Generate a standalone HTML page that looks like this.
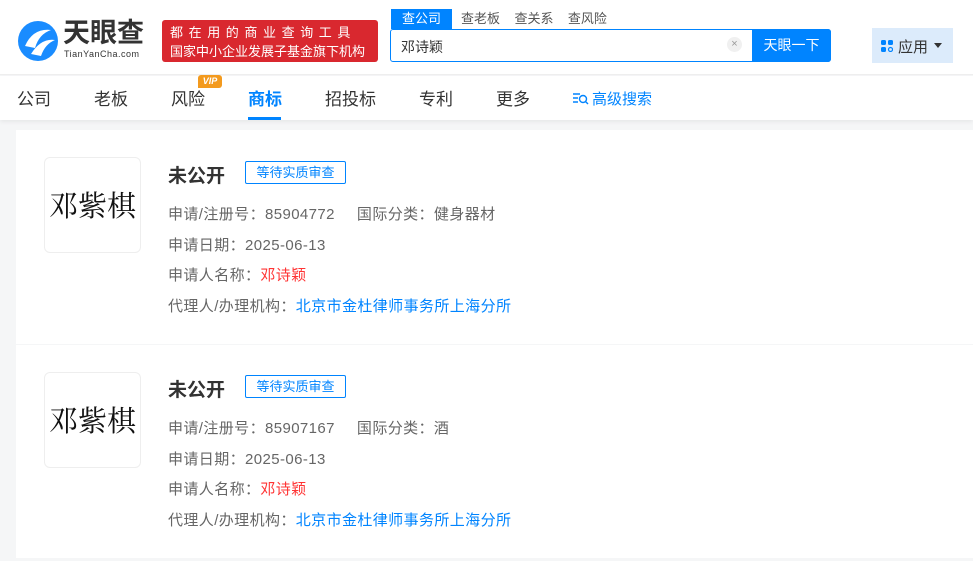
<!DOCTYPE html>
<html><head><meta charset="utf-8"><style>
*{margin:0;padding:0;box-sizing:border-box}
body{width:973px;height:561px;overflow:hidden;background:#f5f6f7;font-family:"Liberation Sans","Noto Sans CJK SC",sans-serif;position:relative}
.hdr{position:absolute;left:0;top:0;width:973px;height:75px;background:#fff;border-bottom:1px solid #eee}
.nav{position:absolute;left:0;top:76px;width:973px;height:44px;background:#fff;box-shadow:0 2px 4px rgba(0,0,0,.06)}
.nav span{position:absolute;top:9px;font-size:17px;color:#333}
.abs{position:absolute}
.card{position:absolute;left:16px;width:957px;background:#fff}
.logo{position:absolute;left:28px;top:27px;width:97px;height:96px;border:1px solid #eee;border-radius:6px;font-family:"Noto Serif CJK SC",serif;font-size:29px;color:#111;text-align:center;line-height:94px}
.t{position:absolute;left:152px;font-size:15px;color:#666;letter-spacing:.4px}
.b{color:#0084ff}.r{color:#f33}
</style></head><body>
<div class="hdr">
 <svg class="abs" style="left:17px;top:20px" width="42" height="42" viewBox="0 0 42 42"><circle cx="21" cy="21" r="20" fill="#1a8cff"/><path d="M8 26 Q16 8 34 10 Q22 14 18 28 Z" fill="#fff"/><path d="M14 34 Q24 18 38 20 Q28 24 24 36 Z" fill="#fff"/></svg>
 <div class="abs" style="left:63px;top:19px;font-size:27px;line-height:28px;font-weight:bold;color:#333">天眼查</div>
 <div class="abs" style="left:64px;top:49px;font-size:9px;line-height:10px;color:#333;letter-spacing:.5px">TianYanCha.com</div>
 <div class="abs" style="left:162px;top:20px;width:216px;height:42px;background:#d9282f;border-radius:3px;color:#fff;font-size:13px;line-height:19px;padding:3px 0 0 8px"><div style="letter-spacing:5.6px">都在用的商业查询工具</div><div>国家中小企业发展子基金旗下机构</div></div>
 <div class="abs" style="left:391px;top:9px;width:61px;height:20px;background:#0084ff;color:#fff;font-size:13px;text-align:center;line-height:19px">查公司</div>
 <div class="abs" style="left:461px;top:9px;font-size:13px;color:#555;line-height:19px">查老板&nbsp;&nbsp;&nbsp;&nbsp;查关系&nbsp;&nbsp;&nbsp;&nbsp;查风险</div>
 <div class="abs" style="left:390px;top:29px;width:441px;height:33px;border:1px solid #0084ff;border-radius:3px;background:#fff"></div>
 <div class="abs" style="left:401px;top:37px;font-size:14px;color:#333">邓诗颖</div>
 <div class="abs" style="left:727px;top:37px;width:15px;height:15px;border-radius:50%;background:#f0f0f0;color:#999;font-size:11px;text-align:center;line-height:15px">×</div>
 <div class="abs" style="left:752px;top:29px;width:79px;height:33px;background:#0084ff;border-radius:0 3px 3px 0;color:#fff;font-size:14px;text-align:center;line-height:33px">天眼一下</div>
 <div class="abs" style="left:872px;top:28px;width:81px;height:35px;background:#dcebfb"></div>
 <svg class="abs" style="left:881px;top:40px" width="12" height="12"><rect x="0" y="0" width="5" height="5" rx="1.5" fill="#0084ff"/><rect x="7" y="0" width="5" height="5" rx="1.5" fill="#0084ff"/><rect x="0" y="7" width="5" height="5" rx="1.5" fill="#0084ff"/><circle cx="9.5" cy="9.5" r="2" fill="none" stroke="#0084ff" stroke-width="1.2"/></svg>
 <div class="abs" style="left:898px;top:36px;font-size:15px;color:#333">应用</div>
 <div class="abs" style="left:934px;top:43px;width:0;height:0;border-left:4px solid transparent;border-right:4px solid transparent;border-top:5px solid #333"></div>
</div>
<div class="nav">
 <span style="left:17px">公司</span><span style="left:94px">老板</span><span style="left:171px">风险</span>
 <span style="left:248px;color:#0084ff;font-weight:bold">商标</span>
 <div class="abs" style="left:248px;top:41px;width:33px;height:3px;background:#0084ff"></div>
 <span style="left:325px">招投标</span><span style="left:419px">专利</span><span style="left:496px">更多</span>
 <div class="abs" style="left:198px;top:-1px;width:24px;height:13px;background:#f39a1e;border-radius:3px 3px 3px 0;color:#fff;font-size:9px;font-weight:bold;font-style:italic;text-align:center;line-height:13px">VIP</div>
 <svg class="abs" style="left:573px;top:17px" width="16" height="12"><path d="M0 1H7M0 5H5M0 9H5" stroke="#0084ff" stroke-width="1.4"/><circle cx="10" cy="6" r="3.5" fill="none" stroke="#0084ff" stroke-width="1.4"/><path d="M12.5 8.5L15 11" stroke="#0084ff" stroke-width="1.4"/></svg>
 <span style="left:592px;top:12px;font-size:15px;color:#0084ff">高级搜索</span>
</div>
<div class="card" style="top:130px;height:214px">
 <div class="logo">邓紫棋</div>
 <div class="abs" style="left:152px;top:31px;font-size:19px;font-weight:bold;color:#333">未公开</div>
 <div class="abs" style="left:229px;top:31px;width:101px;height:23px;border:1px solid #0084ff;border-radius:2px;color:#0084ff;font-size:13px;text-align:center;line-height:21px">等待实质审查</div>
 <div class="t" style="top:73px">申请/注册号：85904772<span style="margin-left:22px">国际分类：健身器材</span></div>
 <div class="t" style="top:104px">申请日期：2025-06-13</div>
 <div class="t" style="top:134px">申请人名称：<span class="r">邓诗颖</span></div>
 <div class="t" style="top:165px">代理人/办理机构：<span class="b">北京市金杜律师事务所上海分所</span></div>
</div>
<div class="card" style="top:345px;height:213px">
 <div class="logo">邓紫棋</div>
 <div class="abs" style="left:152px;top:30px;font-size:19px;font-weight:bold;color:#333">未公开</div>
 <div class="abs" style="left:229px;top:30px;width:101px;height:23px;border:1px solid #0084ff;border-radius:2px;color:#0084ff;font-size:13px;text-align:center;line-height:21px">等待实质审查</div>
 <div class="t" style="top:72px">申请/注册号：85907167<span style="margin-left:22px">国际分类：酒</span></div>
 <div class="t" style="top:103px">申请日期：2025-06-13</div>
 <div class="t" style="top:133px">申请人名称：<span class="r">邓诗颖</span></div>
 <div class="t" style="top:164px">代理人/办理机构：<span class="b">北京市金杜律师事务所上海分所</span></div>
</div>
</body></html>
